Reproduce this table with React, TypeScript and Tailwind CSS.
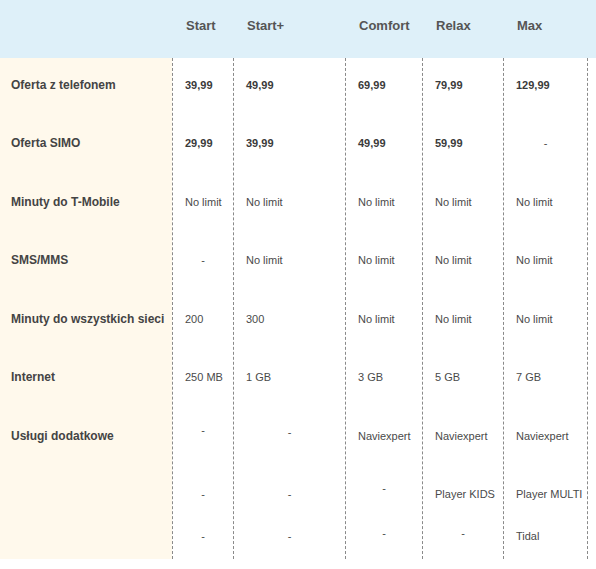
import React from "react";

type Cell = { t: string; b?: boolean; c?: boolean; pt?: string };

const rowH = [
  "h-[58px]",
  "h-[59px]",
  "h-[58px]",
  "h-[59px]",
  "h-[58px]",
  "h-[59px]",
  "h-[58px]",
  "h-[50px]",
  "h-[42px]",
];

const labels = [
  "Oferta z telefonem",
  "Oferta SIMO",
  "Minuty do T-Mobile",
  "SMS/MMS",
  "Minuty do wszystkich sieci",
  "Internet",
  "Usługi dodatkowe",
  "",
  "",
];

const plans: { name: string; w: string; last?: boolean; cells: Cell[] }[] = [
  {
    name: "Start",
    w: "w-[61px]",
    cells: [
      { t: "39,99", b: true },
      { t: "29,99", b: true },
      { t: "No limit" },
      { t: "-", c: true },
      { t: "200" },
      { t: "250 MB" },
      { t: "-", c: true, pt: "pt-[14px]" },
      { t: "-", c: true },
      { t: "-", c: true, pt: "pt-[12px]" },
    ],
  },
  {
    name: "Start+",
    w: "w-[112px]",
    cells: [
      { t: "49,99", b: true },
      { t: "39,99", b: true },
      { t: "No limit" },
      { t: "No limit" },
      { t: "300" },
      { t: "1 GB" },
      { t: "-", c: true, pt: "pt-[16px]" },
      { t: "-", c: true },
      { t: "-", c: true, pt: "pt-[12px]" },
    ],
  },
  {
    name: "Comfort",
    w: "w-[77px]",
    cells: [
      { t: "69,99", b: true },
      { t: "49,99", b: true },
      { t: "No limit" },
      { t: "No limit" },
      { t: "No limit" },
      { t: "3 GB" },
      { t: "Naviexpert" },
      { t: "-", c: true, pt: "pt-[14px]" },
      { t: "-", c: true, pt: "pt-[9px]" },
    ],
  },
  {
    name: "Relax",
    w: "w-[81px]",
    cells: [
      { t: "79,99", b: true },
      { t: "59,99", b: true },
      { t: "No limit" },
      { t: "No limit" },
      { t: "No limit" },
      { t: "5 GB" },
      { t: "Naviexpert" },
      { t: "Player KIDS" },
      { t: "-", c: true, pt: "pt-[9px]" },
    ],
  },
  {
    name: "Max",
    w: "w-[85px]",
    last: true,
    cells: [
      { t: "129,99", b: true },
      { t: "-", c: true },
      { t: "No limit" },
      { t: "No limit" },
      { t: "No limit" },
      { t: "7 GB" },
      { t: "Naviexpert" },
      { t: "Player MULTI" },
      { t: "Tidal", pt: "pt-[12px]" },
    ],
  },
];

export default function App() {
  return (
    <div
      className="w-[596px] h-[569px] bg-white"
      style={{ fontFamily: '"Liberation Sans", Arial, sans-serif' }}
    >
      {/* header */}
      <div className="flex h-[58px] bg-[#def0f9]">
        <div className="w-[172px] shrink-0" />
        {plans.map((p) => (
          <div
            key={p.name}
            className={`${p.w} shrink-0 pl-[14px] pt-[18px] text-[13px] leading-[16px] font-bold text-[#555]`}
          >
            {p.name}
          </div>
        ))}
      </div>

      {/* body */}
      <div className="flex">
        <div className="w-[172px] shrink-0 bg-[#fff9ec] flex flex-col">
          {labels.map((l, i) => (
            <div
              key={i}
              className={`${rowH[i]} pl-[11px] pt-[20px] text-[12px] leading-[14px] font-bold text-[#444]`}
            >
              {l}
            </div>
          ))}
        </div>
        {plans.map((p) => (
          <div
            key={p.name}
            className={`${p.w} shrink-0 flex flex-col border-l border-dashed border-[#8a8a8a] ${
              p.last ? "border-r" : ""
            }`}
          >
            {p.cells.map((c, i) => (
              <div
                key={i}
                className={`${rowH[i]} ${c.pt ?? "pt-[20px]"} ${
                  c.c ? "text-center" : "pl-[12px]"
                } text-[11px] leading-[14px] whitespace-nowrap ${
                  c.b ? "font-bold text-[#3a3a3a]" : "text-[#4a4a4a]"
                }`}
              >
                {c.t}
              </div>
            ))}
          </div>
        ))}
      </div>
    </div>
  );
}
